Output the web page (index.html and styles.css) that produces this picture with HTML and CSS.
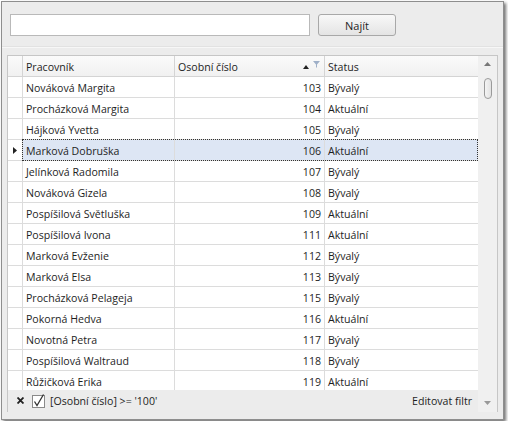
FILE: index.html
```html
<!DOCTYPE html>
<html lang="cs">

<head>
    <meta charset="utf-8">
    <title>Pracovníci</title>
    <link rel="stylesheet" href="styles.css">
</head>

<body>

    <div class="okno">
        <div class="hledani">
            <input type="text" class="pole">
            <button class="najit">Najít</button>
        </div>
        <div class="oddelovac"></div>

        <div class="mrizka">
            <div class="data">
                <div class="radky">
                    <div class="radek hlavicka">
                        <div class="bunka ind"></div>
                        <div class="bunka">Pracovník</div>
                        <div class="bunka os">
                            <span>Osobní číslo</span>
                            <span class="ikony">
                                <svg width="6" height="4" viewBox="0 0 6 4"><path d="M0 4 L3 0 L6 4 Z" fill="#222"/></svg>
                                <svg width="7" height="7" viewBox="0 0 7 7"><path d="M0 0 H7 L4 3.5 V7 L3 6 V3.5 Z" fill="#9fb0c8"/></svg>
                            </span>
                        </div>
                        <div class="bunka">Status</div>
                    </div>

                    <div class="radek"><div class="bunka ind"></div><div class="bunka">Nováková Margita</div><div class="bunka cislo">103</div><div class="bunka">Bývalý</div></div>
                    <div class="radek"><div class="bunka ind"></div><div class="bunka">Procházková Margita</div><div class="bunka cislo">104</div><div class="bunka">Aktuální</div></div>
                    <div class="radek"><div class="bunka ind"></div><div class="bunka">Hájková Yvetta</div><div class="bunka cislo">105</div><div class="bunka">Bývalý</div></div>
                    <div class="radek vybrany"><div class="bunka ind"><svg width="4" height="7" viewBox="0 0 4 7"><path d="M0 0 L4 3.5 L0 7 Z" fill="#222"/></svg></div><div class="bunka">Marková Dobruška</div><div class="bunka cislo">106</div><div class="bunka">Aktuální</div></div>
                    <div class="radek"><div class="bunka ind"></div><div class="bunka">Jelínková Radomila</div><div class="bunka cislo">107</div><div class="bunka">Bývalý</div></div>
                    <div class="radek"><div class="bunka ind"></div><div class="bunka">Nováková Gizela</div><div class="bunka cislo">108</div><div class="bunka">Bývalý</div></div>
                    <div class="radek"><div class="bunka ind"></div><div class="bunka">Pospíšilová Světluška</div><div class="bunka cislo">109</div><div class="bunka">Aktuální</div></div>
                    <div class="radek"><div class="bunka ind"></div><div class="bunka">Pospíšilová Ivona</div><div class="bunka cislo">111</div><div class="bunka">Aktuální</div></div>
                    <div class="radek"><div class="bunka ind"></div><div class="bunka">Marková Evženie</div><div class="bunka cislo">112</div><div class="bunka">Bývalý</div></div>
                    <div class="radek"><div class="bunka ind"></div><div class="bunka">Marková Elsa</div><div class="bunka cislo">113</div><div class="bunka">Bývalý</div></div>
                    <div class="radek"><div class="bunka ind"></div><div class="bunka">Procházková Pelageja</div><div class="bunka cislo">115</div><div class="bunka">Bývalý</div></div>
                    <div class="radek"><div class="bunka ind"></div><div class="bunka">Pokorná Hedva</div><div class="bunka cislo">116</div><div class="bunka">Aktuální</div></div>
                    <div class="radek"><div class="bunka ind"></div><div class="bunka">Novotná Petra</div><div class="bunka cislo">117</div><div class="bunka">Bývalý</div></div>
                    <div class="radek"><div class="bunka ind"></div><div class="bunka">Pospíšilová Waltraud</div><div class="bunka cislo">118</div><div class="bunka">Bývalý</div></div>
                    <div class="radek"><div class="bunka ind"></div><div class="bunka">Růžičková Erika</div><div class="bunka cislo">119</div><div class="bunka">Aktuální</div></div>
                </div>

                <div class="filtr">
                    <svg class="zrusit" width="7" height="7" viewBox="0 0 7 7"><path d="M0.5 0.5 L6.5 6.5 M6.5 0.5 L0.5 6.5" stroke="#222" stroke-width="1.8"/></svg>
                    <svg class="zaskrt" width="14" height="14" viewBox="0 0 14 14">
                        <rect x="0.5" y="1.5" width="12" height="12" fill="#fff" stroke="#8a8a8a"/>
                        <path d="M2.5 7.5 L5 11.5 L11.5 0.5" fill="none" stroke="#333" stroke-width="1.3"/>
                    </svg>
                    <span class="vyraz">[Osobní číslo] &gt;= '100'</span>
                    <span class="upravit">Editovat filtr</span>
                </div>
            </div>

            <div class="posuvnik">
                <svg class="sipka" width="7" height="4" viewBox="0 0 7 4"><path d="M0 4 L3.5 0 L7 4 Z" fill="#777"/></svg>
                <div class="jezdec"></div>
                <svg class="sipka dolu" width="7" height="4" viewBox="0 0 7 4"><path d="M0 0 L3.5 4 L7 0 Z" fill="#999"/></svg>
            </div>
        </div>
    </div>

</body>

</html>
```

FILE: styles.css
```css
body {
    margin: 0;
    background-color: #ffffff;
    font-family: "Open Sans", "Noto Sans", sans-serif;
    font-size: 10.6px;
    color: #1e1e1e;
}

.okno {
    box-sizing: border-box;
    margin: 1px;
    width: 503px;
    height: 419px;
    border: 1px solid #8e8e8e;
    background-color: #ececec;
    box-shadow: 2px 2px 3px rgba(0, 0, 0, 0.55);
}

/*Hledani*/

.hledani {
    display: flex;
    gap: 8px;
    padding: 12px 0 0 8px;
}

.pole {
    box-sizing: border-box;
    width: 300px;
    height: 22px;
    margin: 0;
    border: 1px solid #b9b9b9;
    background-color: #ffffff;
}

.najit {
    box-sizing: border-box;
    width: 78px;
    height: 22px;
    margin: 0;
    border: 1px solid #a8a8a8;
    border-radius: 3px;
    background: linear-gradient(#f8f8f8, #e4e4e4);
    font-family: inherit;
    font-size: 11px;
    color: #1e1e1e;
}

.oddelovac {
    height: 1px;
    margin-top: 10px;
    background-color: #f7f7f7;
    border-top: 1px solid #e2e2e2;
}

/*Mrizka*/

.mrizka {
    display: flex;
    width: 491px;
    height: 357px;
    box-sizing: border-box;
    margin: 7px 0 0 5px;
    border: 1px solid #c6c6c6;
    border-bottom: none;
}

.data {
    display: flex;
    flex-direction: column;
    width: 470px;
}

.radky {
    height: 334px;
    overflow: hidden;
    background-color: #ffffff;
}

.radek {
    position: relative;
    display: grid;
    grid-template-columns: 15px 152px 150px 153px;
    height: 21px;
}

.bunka {
    box-sizing: border-box;
    display: flex;
    align-items: center;
    padding: 1px 3px 0;
    border-right: 1px solid #dcdcdc;
    border-bottom: 1px solid #dcdcdc;
    white-space: nowrap;
    overflow: hidden;
}

.bunka:last-child {
    border-right: none;
}

.hlavicka .bunka {
    background: linear-gradient(#fbfbfb, #f1f1f1);
    border-color: #d4d4d4;
}

.ind {
    padding: 0;
    justify-content: center;
}

.os {
    justify-content: space-between;
}

.ikony {
    display: flex;
    align-items: center;
    gap: 4px;
    margin-right: 1px;
}

.ikony svg:last-child {
    margin-top: -4px;
}

.cislo {
    justify-content: flex-end;
}

.vybrany .bunka {
    background-color: #dde6f4;
}

.vybrany .ind {
    background-color: #ffffff;
}

.vybrany::after {
    content: "";
    position: absolute;
    left: 14px;
    right: 0;
    top: -1px;
    bottom: 0;
    border: 1px dotted #333333;
}

/*Filtr*/

.filtr {
    display: flex;
    align-items: center;
    height: 21px;
    padding: 0 6px 0 9px;
    background-color: #ececec;
}

.zrusit {
    margin-right: 8px;
}

.zaskrt {
    margin-right: 4px;
}

.upravit {
    margin-left: auto;
}

/*Posuvnik*/

.posuvnik {
    position: relative;
    width: 19px;
    background-color: #f0f0f0;
}

.sipka {
    display: block;
    margin: 6px auto 0;
}

.jezdec {
    box-sizing: border-box;
    width: 8px;
    height: 21px;
    margin: 12px 0 0 6px;
    border: 1px solid #9a9a9a;
    border-radius: 4px;
    background: linear-gradient(90deg, #f4f4f4, #e2e2e2);
}

.dolu {
    position: absolute;
    left: 6px;
    bottom: 7px;
    margin: 0;
}
```
